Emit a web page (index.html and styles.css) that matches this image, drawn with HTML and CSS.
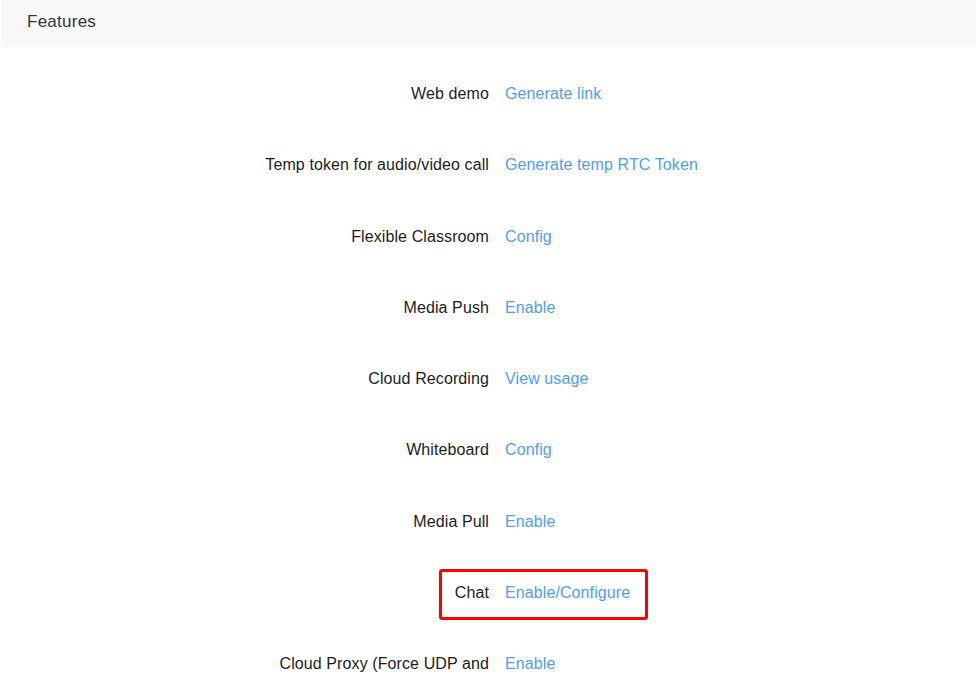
FILE: index.html
```html
<!DOCTYPE html>
<html lang="en">
<head>
<meta charset="utf-8">
<title>Features</title>
<link rel="stylesheet" href="styles.css">
</head>
<body>
<div class="page">
  <div class="panel-header">Features</div>
  <div class="feature-list">
    <div class="row"><div class="label">Web demo</div><a class="link">Generate link</a></div>
    <div class="row"><div class="label">Temp token for audio/video call</div><a class="link">Generate temp RTC Token</a></div>
    <div class="row"><div class="label">Flexible Classroom</div><a class="link">Config</a></div>
    <div class="row"><div class="label">Media Push</div><a class="link">Enable</a></div>
    <div class="row"><div class="label">Cloud Recording</div><a class="link">View usage</a></div>
    <div class="row"><div class="label">Whiteboard</div><a class="link">Config</a></div>
    <div class="row"><div class="label">Media Pull</div><a class="link">Enable</a></div>
    <div class="row highlighted"><div class="label">Chat</div><a class="link">Enable/Configure</a><span class="callout"></span></div>
    <div class="row"><div class="label">Cloud Proxy (Force UDP and</div><a class="link">Enable</a></div>
  </div>
</div>
</body>
</html>
```
FILE: styles.css
```css
html, body {
  margin: 0;
  padding: 0;
  background: #ffffff;
  font-family: Arial, "Liberation Sans", sans-serif;
  overflow: hidden;
}
.page {
  padding-left: 2px;
  width: 990px;
}
.panel-header {
  height: 47px;
  box-sizing: border-box;
  background: #f8f8fa;
  border-radius: 0 0 0 3px;
  padding-left: 25px;
  padding-bottom: 4px;
  display: flex;
  align-items: center;
  font-size: 17px;
  letter-spacing: 0.25px;
  color: #30343b;
}
.feature-list {
  padding-top: 11.4px;
}
.row {
  position: relative;
  display: grid;
  grid-template-columns: 487px auto;
  column-gap: 16px;
  align-items: center;
  height: 71.25px;
  font-size: 16px;
  letter-spacing: 0.1px;
}
.label {
  text-align: right;
  color: #1c1c1c;
  white-space: nowrap;
}
.link {
  color: #4f9df8;
  text-decoration: none;
  cursor: pointer;
  justify-self: start;
}
.callout {
  position: absolute;
  left: 437px;
  top: calc(50% - 24px);
  width: 209px;
  height: 51px;
  box-sizing: border-box;
  border: 3px solid #ff0000;
  border-radius: 3px;
  pointer-events: none;
}
```
